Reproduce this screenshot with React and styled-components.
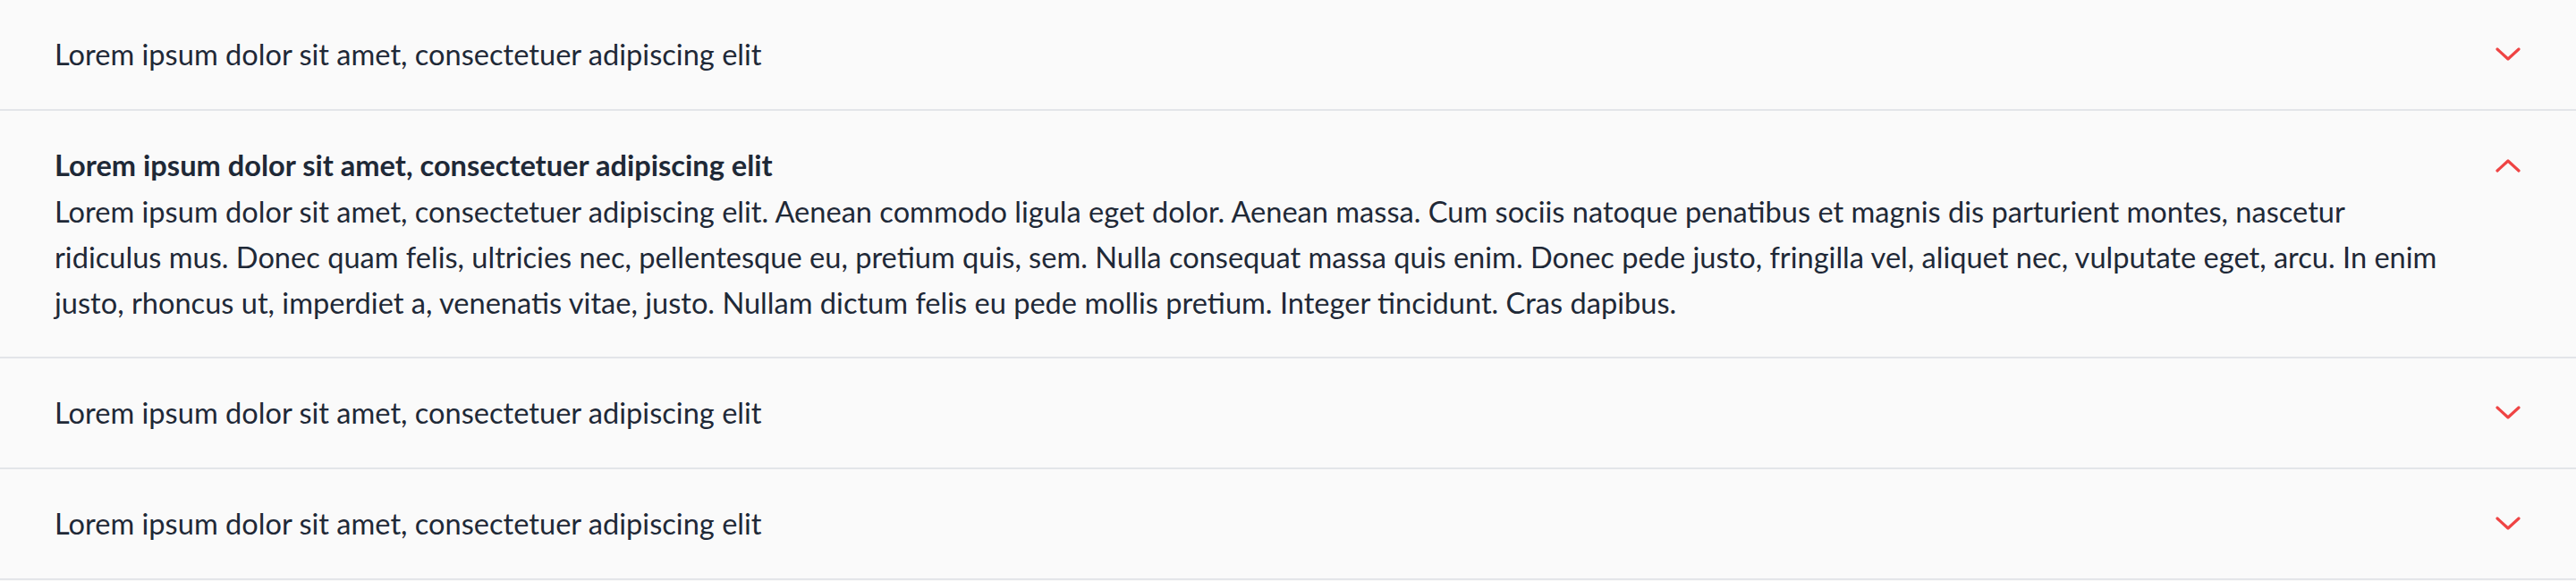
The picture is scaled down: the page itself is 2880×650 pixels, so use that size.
import React, { useState } from 'react';
import styled, { createGlobalStyle } from 'styled-components';

const GlobalStyle = createGlobalStyle`
    html, body {
        margin: 0;
        padding: 0;
        background-color: #fafafa;
    }
    body {
        font-family: Lato, "Noto Sans", sans-serif;
        color: #1f2937;
    }
`;

const items = [
    {
        id: 1,
        title: 'Lorem ipsum dolor sit amet, consectetuer adipiscing elit',
        body: 'Lorem ipsum dolor sit amet, consectetuer adipiscing elit. Aenean commodo ligula eget dolor. Aenean massa. Cum sociis natoque penatibus et magnis dis parturient montes, nascetur ridiculus mus. Donec quam felis, ultricies nec, pellentesque eu, pretium quis, sem. Nulla consequat massa quis enim. Donec pede justo, fringilla vel, aliquet nec, vulputate eget, arcu. In enim justo, rhoncus ut, imperdiet a, venenatis vitae, justo. Nullam dictum felis eu pede mollis pretium. Integer tincidunt. Cras dapibus.',
    },
    {
        id: 2,
        title: 'Lorem ipsum dolor sit amet, consectetuer adipiscing elit',
        body: 'Lorem ipsum dolor sit amet, consectetuer adipiscing elit. Aenean commodo ligula eget dolor. Aenean massa. Cum sociis natoque penatibus et magnis dis parturient montes, nascetur ridiculus mus. Donec quam felis, ultricies nec, pellentesque eu, pretium quis, sem. Nulla consequat massa quis enim. Donec pede justo, fringilla vel, aliquet nec, vulputate eget, arcu. In enim justo, rhoncus ut, imperdiet a, venenatis vitae, justo. Nullam dictum felis eu pede mollis pretium. Integer tincidunt. Cras dapibus.',
    },
    {
        id: 3,
        title: 'Lorem ipsum dolor sit amet, consectetuer adipiscing elit',
        body: 'Lorem ipsum dolor sit amet, consectetuer adipiscing elit. Aenean commodo ligula eget dolor.',
    },
    {
        id: 4,
        title: 'Lorem ipsum dolor sit amet, consectetuer adipiscing elit',
        body: 'Lorem ipsum dolor sit amet, consectetuer adipiscing elit. Aenean commodo ligula eget dolor.',
    },
];

const Chevron = ({ up }) => (
    <ChevronSvg viewBox="0 0 28 16" $up={up}>
        <polyline points="2,2 14,13 26,2" />
    </ChevronSvg>
);

const App = () => {
    const [openId, setOpenId] = useState(2);

    return (
        <>
            <GlobalStyle />
            <Accordion>
                {items.map((item) => {
                    const open = item.id === openId;
                    return (
                        <Item key={item.id}>
                            <Header onClick={() => setOpenId(open ? null : item.id)}>
                                <Title $open={open}>{item.title}</Title>
                                <Chevron up={open} />
                            </Header>
                            {open && <Body>{item.body}</Body>}
                        </Item>
                    );
                })}
            </Accordion>
        </>
    );
};

const Accordion = styled.div`
    display: flex;
    flex-direction: column;
    width: 100%;
`;

const Item = styled.div`
    padding: 35px 62px 35px 61px;
    border-bottom: 2px solid #e3e5e9;
`;

const Header = styled.div`
    display: flex;
    align-items: center;
    justify-content: space-between;
    cursor: pointer;
`;

const Title = styled.div`
    font-size: 32.6px;
    line-height: 52px;
    font-weight: ${(p) => (p.$open ? 700 : 400)};
`;

const ChevronSvg = styled.svg`
    width: 28px;
    height: 16px;
    fill: none;
    stroke: #ef4444;
    stroke-width: 3.2;
    stroke-linecap: round;
    stroke-linejoin: round;
    transform: ${(p) => (p.$up ? 'rotate(180deg)' : 'none')};
`;

const Body = styled.p`
    margin: 0;
    padding-right: 80px;
    font-size: 32.6px;
    line-height: 51px;
`;

export default App;
